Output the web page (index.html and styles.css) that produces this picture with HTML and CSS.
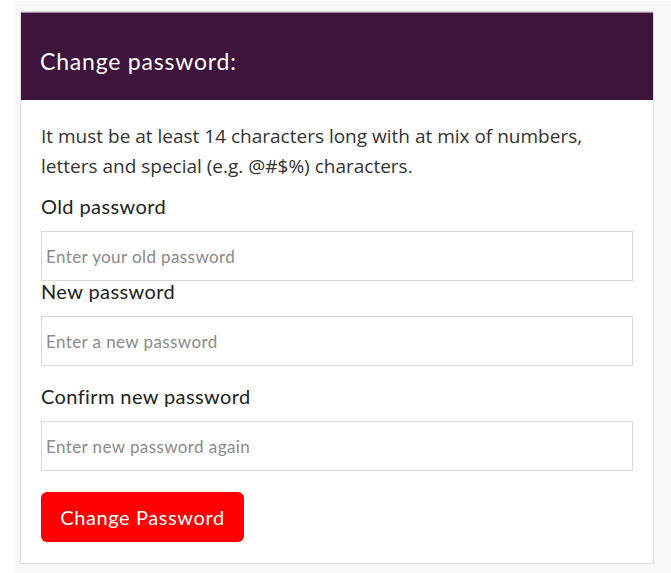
FILE: index.html
```html
<!DOCTYPE html>
<html lang="en">

<head>
    <meta charset="UTF-8">
    <meta name="viewport" content="width=device-width, initial-scale=1.0">
    <title>Change password</title>
    <link rel="stylesheet" href="styles.css">
</head>

<body>
    <div class="page">
        <div class="card">
            <div class="card_head">
                <h2 class="title">Change password:</h2>
            </div>
            <form class="card_body">
                <p class="hint">It must be at least 14 characters long with at mix of numbers, letters and special (e.g. @#$%) characters.</p>
                <label class="label label_first" for="old">Old password</label>
                <input class="input" id="old" type="password" placeholder="Enter your old password">
                <label class="label label_tight" for="new">New password</label>
                <input class="input" id="new" type="password" placeholder="Enter a new password">
                <label class="label" for="again">Confirm new password</label>
                <input class="input" id="again" type="password" placeholder="Enter new password again">
                <button class="submit" type="button">Change Password</button>
            </form>
        </div>
    </div>
</body>

</html>
```

FILE: styles.css
```css
* {
    margin: 0;
    padding: 0;
    box-sizing: border-box;
}

body {
    background-color: #fff;
    font-family: "Open Sans", "Noto Sans", sans-serif;
}

.page {
    margin: 1px 0 0 15px;
    padding: 10px 17px 10px 5px;
    background-color: #f8f8f8;
}

.card {
    background-color: #fff;
    border: 1px solid #dcdcdc;
}

.card_head {
    height: 88px;
    background-color: #3d143b;
    border-top: 1px solid #a58aa3;
    display: flex;
    align-items: center;
    padding-left: 19px;
}

.title {
    font-family: "Lato", "Inter", sans-serif;
    font-weight: 400;
    font-size: 23px;
    letter-spacing: 0.8px;
    color: #fff;
    padding-top: 8px;
}

.card_body {
    display: flex;
    flex-direction: column;
    align-items: flex-start;
    padding: 21px 20px 21px 20px;
}

.hint {
    max-width: 595px;
    font-size: 19px;
    line-height: 30px;
    color: #333;
}

.label {
    font-family: "Lato", "Inter", sans-serif;
    font-size: 20px;
    letter-spacing: 0.4px;
    color: #222;
    margin-top: 18px;
    margin-bottom: 13px;
}

.label_first {
    margin-top: 13px;
}

.label_tight {
    margin-top: -2px;
}

.input {
    width: 592px;
    height: 50px;
    border: 1px solid #d8d8d8;
    padding: 0 4px;
    font-family: "Lato", "Inter", sans-serif;
    font-size: 17px;
    letter-spacing: 0.4px;
    color: #333;
}

.input::placeholder {
    color: #8a8a8a;
}

.submit {
    margin-top: 21px;
    width: 203px;
    height: 50px;
    border: none;
    border-radius: 6px;
    background-color: #ff0000;
    color: #fff;
    font-family: "Lato", "Inter", sans-serif;
    font-size: 20px;
    letter-spacing: 0.6px;
}
```
